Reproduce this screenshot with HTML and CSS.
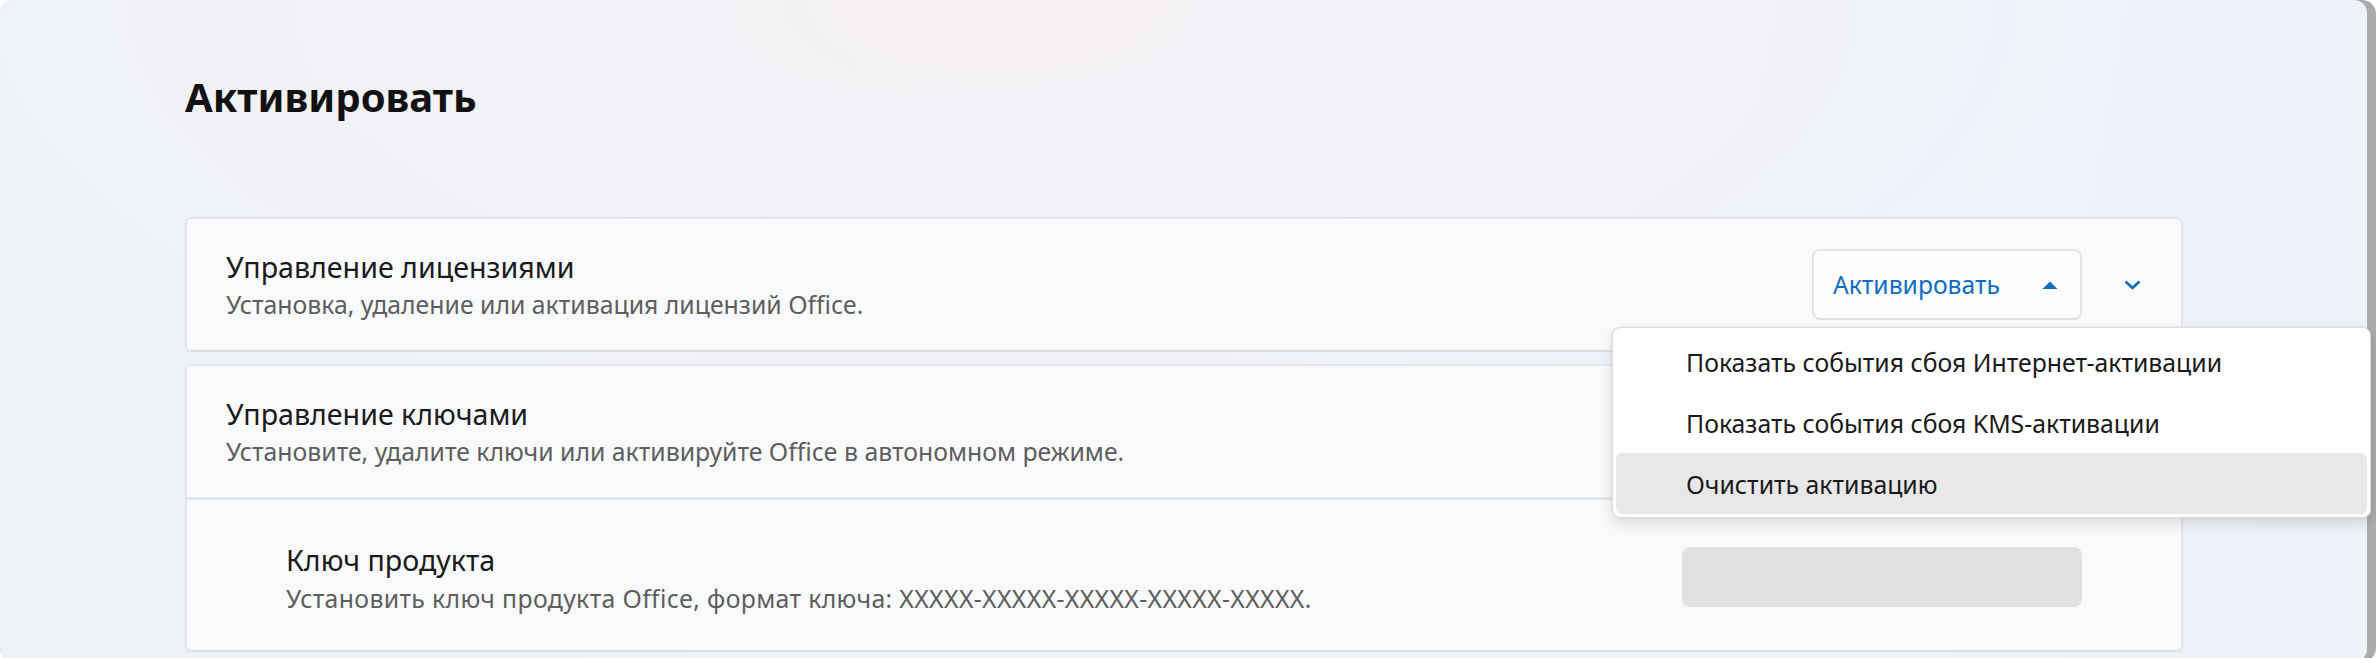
FILE: index.html
```html
<!DOCTYPE html>
<html lang="ru">
<head>
<meta charset="utf-8">
<title>Активировать</title>
<link rel="stylesheet" href="styles.css">
</head>
<body>
<div class="frame">
  <div class="window">
    <main class="content">
      <h1 class="page-title">Активировать</h1>

      <section class="card">
        <div class="row">
          <div class="text">
            <div class="item-title">Управление лицензиями</div>
            <div class="item-desc">Установка, удаление или активация лицензий Office.</div>
          </div>
          <div class="actions">
            <button class="split-btn" type="button">
              <span class="split-label">Активировать</span>
              <svg class="caret" width="16" height="8" viewBox="0 0 16 8"><path d="M0.5 8 L8 0.5 L15.5 8 Z" fill="#0f6cc4"/></svg>
            </button>
            <button class="expander" type="button" aria-label="Развернуть">
              <svg width="17" height="10" viewBox="0 0 17 10"><polyline points="1.5,1.5 8.5,8 15.5,1.5" fill="none" stroke="#0f6cc4" stroke-width="2.6"/></svg>
            </button>
          </div>
        </div>
      </section>

      <section class="card">
        <div class="row">
          <div class="text">
            <div class="item-title">Управление ключами</div>
            <div class="item-desc">Установите, удалите ключи или активируйте Office в автономном режиме.</div>
          </div>
        </div>
        <div class="subrow">
          <div class="text">
            <div class="item-title">Ключ продукта</div>
            <div class="item-desc">Установить ключ продукта Office, формат ключа: XXXXX-XXXXX-XXXXX-XXXXX-XXXXX.</div>
          </div>
          <div class="key-input"></div>
        </div>
      </section>
    </main>
  </div>

  <div class="menu" role="menu">
    <div class="menu-item">Показать события сбоя Интернет-активации</div>
    <div class="menu-item">Показать события сбоя KMS-активации</div>
    <div class="menu-item hover">Очистить активацию</div>
  </div>
</div>
</body>
</html>
```

FILE: styles.css
```css
html, body {
  margin: 0;
  padding: 0;
  background: #ffffff;
  overflow: hidden;
}

body {
  width: 2376px;
  height: 658px;
  font-family: "Noto Sans", "Open Sans", sans-serif;
  color: #1a1a1a;
}

.frame {
  position: relative;
  width: 2376px;
  height: 662px;
  background: #ababab;
  border-radius: 14px;
}

.window {
  width: 2367px;
  height: 662px;
  border-radius: 13px;
  overflow: hidden;
  background:
    radial-gradient(ellipse 1100px 480px at 42% 0%, rgba(246, 240, 243, 0.85) 0%, rgba(246, 240, 243, 0) 100%),
    linear-gradient(100deg, #eef2f7 0%, #eff2fa 55%, #eef2f8 100%);
}

.content {
  padding: 70px 184px 0 185px;
}

.page-title {
  margin: 0 0 93px 0;
  font-size: 40px;
  line-height: 54px;
  font-weight: 700;
  color: #111111;
}

.card {
  background: #f9fafc;
  border: 2px solid #e3e5ea;
  border-bottom-color: #dcdfe5;
  border-radius: 6px;
  margin-bottom: 12px;
}

.row {
  display: flex;
  align-items: center;
  height: 131px;
  padding: 0 25px 3px 39px;
  box-sizing: border-box;
}

.subrow {
  display: flex;
  align-items: center;
  box-sizing: border-box;
  height: 153px;
  padding: 4px 99px 0 99px;
  border-top: 3px solid #e1e4e9;
}

.text {
  flex: 1;
  min-width: 0;
}

.item-title {
  font-size: 28.6px;
  line-height: 42px;
  color: #1a1a1a;
}

.item-desc {
  font-size: 24.8px;
  line-height: 34px;
  color: #5e5e5e;
}

.row .item-title {
  line-height: 41px;
}

.subrow .item-desc {
  letter-spacing: 0.35px;
}

.actions {
  display: flex;
  align-items: center;
  margin-bottom: -3px;
}

.split-btn {
  display: flex;
  align-items: center;
  justify-content: space-between;
  box-sizing: border-box;
  width: 270px;
  height: 71px;
  padding: 0 22px 0 19px;
  background: #fefefe;
  border: 2px solid #e5e5e5;
  border-bottom-color: #dedede;
  border-radius: 8px;
  font-family: inherit;
  font-size: 24.7px;
  color: #0f6cc4;
}

.split-label {
  line-height: 34px;
}

.caret {
  display: block;
}

.expander {
  display: flex;
  align-items: center;
  justify-content: center;
  width: 48px;
  height: 48px;
  margin-left: 26px;
  padding: 0;
  border: none;
  background: transparent;
}

.key-input {
  width: 400px;
  height: 60px;
  background: #e1e1e3;
  border-radius: 8px;
}

.menu {
  position: absolute;
  left: 1612px;
  top: 327px;
  box-sizing: border-box;
  width: 759px;
  height: 191px;
  padding: 3px;
  background: #ffffff;
  border: 1.5px solid #dddddd;
  border-radius: 8px;
  box-shadow: 0 0 0 1px rgba(0, 0, 0, 0.04), 0 6px 14px rgba(0, 0, 0, 0.12);
}

.menu-item {
  display: flex;
  align-items: center;
  height: 61px;
  padding-left: 70px;
  font-size: 24.8px;
  color: #1a1a1a;
  border-radius: 6px;
}

.menu-item.hover {
  background: #e8e8e8;
}
```
